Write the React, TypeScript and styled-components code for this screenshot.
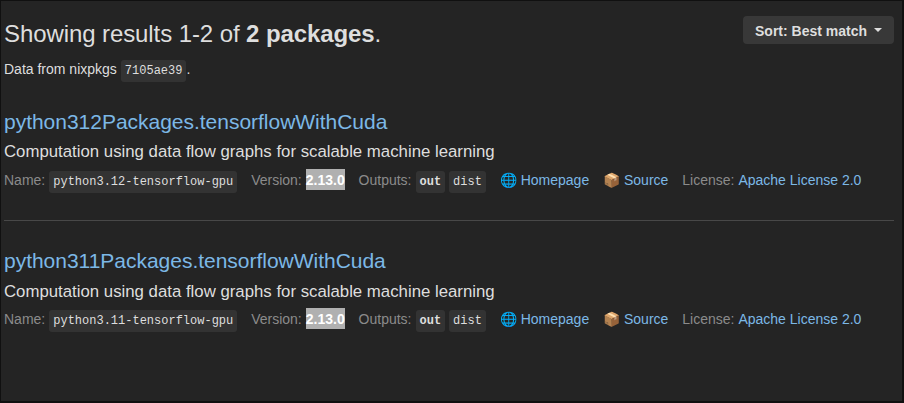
import React from "react";
import styled, { createGlobalStyle } from "styled-components";

const GlobalStyle = createGlobalStyle`
  * { box-sizing: border-box; }
  body {
    margin: 0;
    background: #242424;
    color: #dedede;
    font: 14px/20px "Liberation Sans", Arial, sans-serif;
  }
`;

const Page = styled.main`
  height: 403px;
  overflow: hidden;
  padding: 15px 8px 0 3px;
  border: 1px solid #101010;
  border-right-width: 2px;
  border-bottom-width: 2px;
  white-space: nowrap;
`;

const Header = styled.header`
  display: flex;
  justify-content: space-between;
  align-items: flex-start;
  height: 44px;
`;

const Heading = styled.h2`
  margin: 0;
  font-size: 24px;
  line-height: 36px;
  font-weight: 400;
  letter-spacing: -0.09px;
`;

const SortButton = styled.button`
  display: flex;
  align-items: center;
  gap: 7px;
  width: 151px;
  height: 28px;
  padding: 2px 0 0 12px;
  border: 0;
  border-radius: 4px;
  background: #383838;
  color: #dedede;
  font: bold 14px/20px "Liberation Sans", Arial, sans-serif;
`;

const Caret = styled.span`
  border: 4px solid transparent;
  border-top-color: #dedede;
  border-bottom: 0;
  margin-bottom: 3px;
`;

const Line = styled.div`
  display: flex;
  height: 22px;
  line-height: 19px;
`;

const Code = styled.code<{ $bold?: boolean }>`
  height: 22px;
  padding: 0 4px;
  border-radius: 3px;
  background: #333333;
  color: #dedede;
  font: ${(p) => (p.$bold ? "bold" : "normal")} 12px/22px "Liberation Mono", monospace;
`;

const DataLine = styled(Line)`
  gap: 4px;
`;

const Stop = styled.span`
  margin-left: -4px;
`;

const Results = styled.ul`
  list-style: none;
  margin: 0;
  padding: 0;
`;

const Result = styled.li`
  height: 138.3px;
  padding-top: 26px;

  & + & {
    border-top: 1px solid #484848;
  }
`;

const Title = styled.a`
  display: block;
  color: #7cb8e6;
  font-size: 21px;
  line-height: 28px;
  letter-spacing: -0.02px;
`;

const Description = styled.div`
  margin-top: 5.3px;
  height: 29.7px;
  font-size: 16.8px;
  line-height: 22px;
`;

const Meta = styled(Line)`
  gap: 13.9px;
  color: #8b8b8b;
`;

const Field = styled.span`
  display: flex;
  gap: 4px;
`;

const Selected = styled.strong`
  height: 21px;
  margin-top: -2px;
  padding-top: 2px;
  background: #b0b0b0;
  color: #ffffff;
`;

const Link = styled.a`
  color: #7cb8e6;
`;

type Package = { attribute: string; name: string };

const packages: Package[] = [
  { attribute: "python312Packages.tensorflowWithCuda", name: "python3.12-tensorflow-gpu" },
  { attribute: "python311Packages.tensorflowWithCuda", name: "python3.11-tensorflow-gpu" },
];

const PackageResult = ({ attribute, name }: Package) => (
  <Result>
    <Title>{attribute}</Title>
    <Description>Computation using data flow graphs for scalable machine learning</Description>
    <Meta>
      <Field>Name: <Code>{name}</Code></Field>
      <Field>Version: <Selected>2.13.0</Selected></Field>
      <Field>Outputs: <Code $bold>out</Code><Code>dist</Code></Field>
      <Link>🌐 Homepage</Link>
      <Link>📦 Source</Link>
      <Field>License: <Link>Apache License 2.0</Link></Field>
    </Meta>
  </Result>
);

export default function App() {
  return (
    <>
      <GlobalStyle />
      <Page>
        <Header>
          <Heading>Showing results 1-2 of <strong>2 packages</strong>.</Heading>
          <SortButton>Sort: Best match <Caret /></SortButton>
        </Header>
        <DataLine>Data from nixpkgs <Code>7105ae39</Code><Stop>.</Stop></DataLine>
        <Results>
          {packages.map((pkg) => <PackageResult key={pkg.attribute} {...pkg} />)}
        </Results>
      </Page>
    </>
  );
}
